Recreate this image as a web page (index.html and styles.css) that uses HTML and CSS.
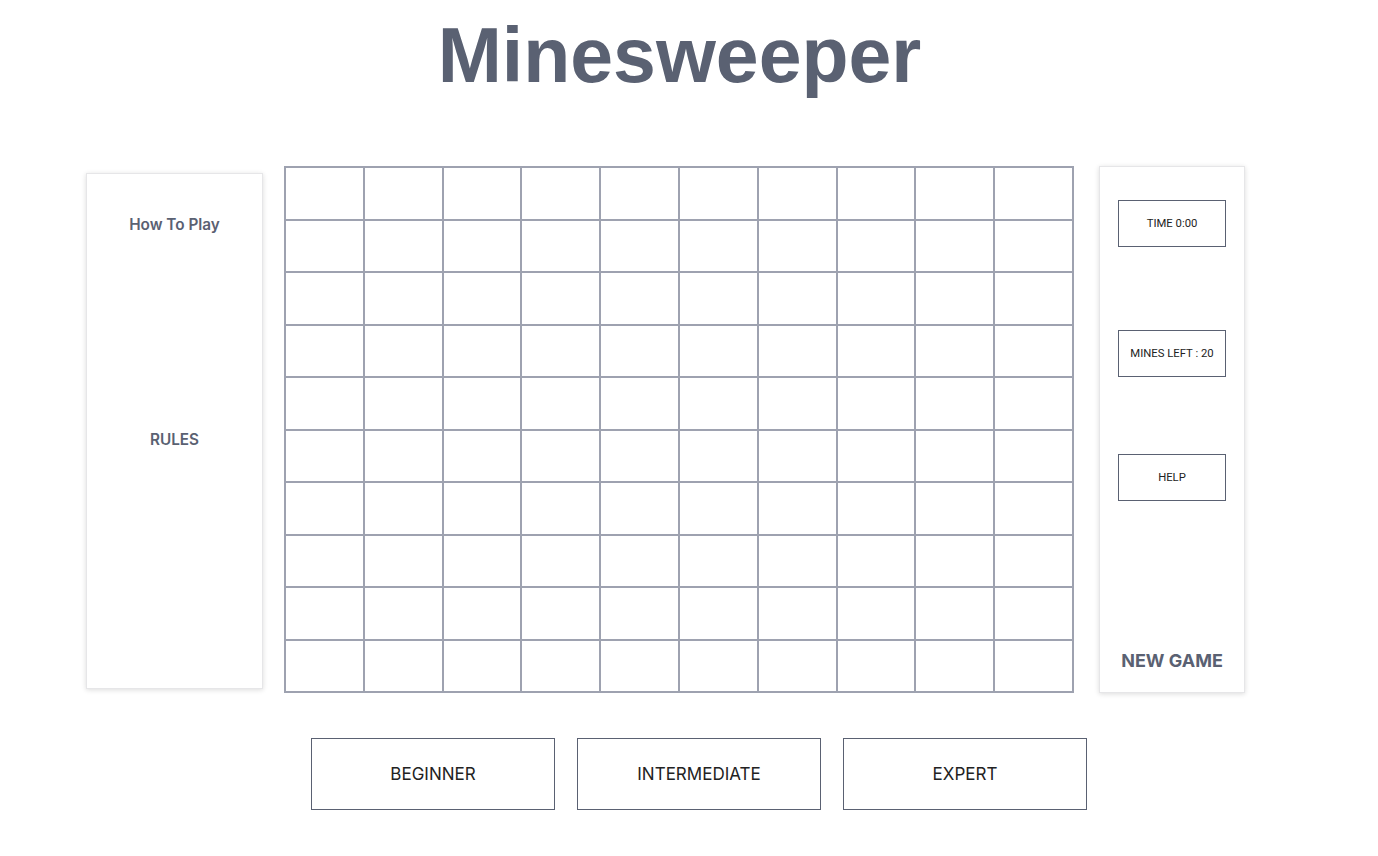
FILE: index.html
```html
<!DOCTYPE html>
<html>
<head>
<meta charset="utf-8">
<link rel="stylesheet" href="styles.css">
</head>
<body>
<div class="page">
  <h1 class="title">Minesweeper</h1>
  <div class="main">
    <div class="panel-left">
      <div class="panel-heading">How To Play</div>
      <div class="panel-rules">RULES</div>
    </div>
    <div class="board" id="board"></div>
    <div class="panel-right">
      <div class="info-box time">TIME 0:00</div>
      <div class="info-box mines">MINES LEFT : 20</div>
      <div class="info-box help">HELP</div>
      <div class="new-game">NEW GAME</div>
    </div>
  </div>
  <div class="levels">
    <div class="level">BEGINNER</div>
    <div class="level">INTERMEDIATE</div>
    <div class="level">EXPERT</div>
  </div>
</div>
<script>
  var b = document.getElementById('board');
  for (var i = 0; i < 100; i++) {
    var c = document.createElement('div');
    c.className = 'cell';
    b.appendChild(c);
  }
</script>
</body>
</html>
```
FILE: styles.css
```css
* { box-sizing: border-box; }
html, body { margin: 0; padding: 0; background: #fff; }
.page { padding-top: 17px; }
.title {
  margin: 0;
  padding-right: 19px;
  text-align: center;
  font-family: "Liberation Sans", Arial, sans-serif;
  font-weight: 700;
  font-size: 77px;
  line-height: 1;
  color: #5a6172;
}
.main {
  display: flex;
  align-items: flex-start;
  padding-left: 86px;
  margin-top: 72px;
}
.panel-left {
  margin-top: 7px;
  width: 177px;
  height: 516px;
  border: 1px solid #e6e6e8;
  box-shadow: 0 1px 5px rgba(0,0,0,0.14);
  display: flex;
  flex-direction: column;
  align-items: center;
  padding-top: 42px;
  font-family: Inter, "Noto Sans", sans-serif;
  color: #5a6172;
}
.panel-heading {
  font-size: 15.3px;
  font-weight: 600;
  line-height: 18px;
}
.panel-rules {
  margin-top: 197px;
  font-size: 15.3px;
  font-weight: 600;
  line-height: 18px;
}
.board {
  margin-left: 21px;
  width: 790px;
  height: 527px;
  border: 1px solid #9ea2b0;
  display: grid;
  grid-template-columns: repeat(10, 1fr);
  grid-template-rows: repeat(10, 1fr);
}
.cell {
  border: 1px solid #9ea2b0;
}
.panel-right {
  margin-left: 25px;
  width: 146px;
  height: 527px;
  border: 1px solid #e6e6e8;
  box-shadow: 0 1px 5px rgba(0,0,0,0.14);
  display: flex;
  flex-direction: column;
  align-items: center;
  padding-top: 33px;
  padding-bottom: 20px;
}
.info-box {
  width: 108px;
  height: 47px;
  border: 1px solid #5a6172;
  display: flex;
  align-items: center;
  justify-content: center;
  font-family: Roboto, "Liberation Sans", sans-serif;
  font-size: 11.3px;
  color: #222;
}
.mines { margin-top: 83px; }
.help { margin-top: 77px; }
.new-game {
  margin-top: auto;
  font-family: Inter, "Noto Sans", sans-serif;
  font-weight: 700;
  font-size: 18px;
  line-height: 22px;
  color: #5a6172;
}
.levels {
  display: flex;
  gap: 22px;
  padding-left: 311px;
  margin-top: 45px;
}
.level {
  width: 244px;
  height: 72px;
  border: 1px solid #5a6172;
  display: flex;
  align-items: center;
  justify-content: center;
  font-family: Inter, "Noto Sans", sans-serif;
  font-size: 17px;
  color: #222;
}
```
